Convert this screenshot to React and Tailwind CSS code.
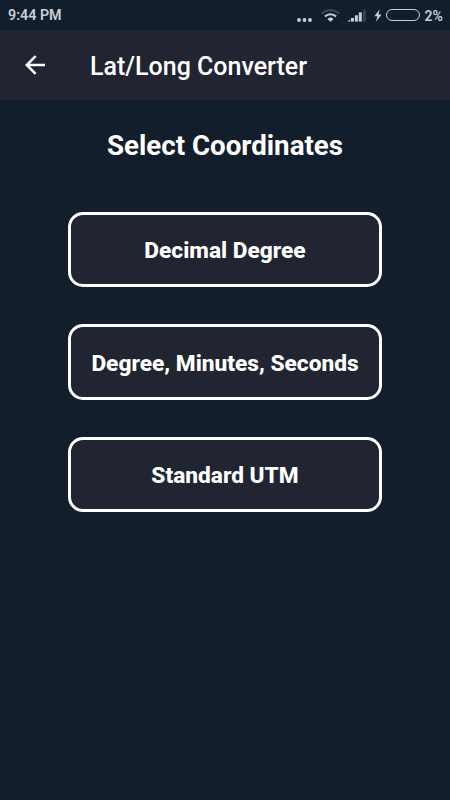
const formats = ['Decimal Degree', 'Degree, Minutes, Seconds', 'Standard UTM']

function WifiIcon() {
  return (
    <svg className="h-[13px] w-[19px]" viewBox="0 0 19 13" fill="none">
      <path d="M0.8 4.6a12.4 12.4 0 0 1 17.4 0" stroke="#3c4655" strokeWidth="2.2" />
      <path d="M3.9 7.6a8 8 0 0 1 11.2 0" stroke="#c9ced7" strokeWidth="2.1" />
      <path d="M9.5 12.8 6.5 9.9a4.4 4.4 0 0 1 6 0z" fill="#c9ced7" />
    </svg>
  )
}

function SignalIcon() {
  return (
    <svg className="h-[13px] w-[19px]" viewBox="0 0 19 13" fill="#c9ced7">
      <path d="M0.2 12.6 3.2 10.6v2z" />
      <rect x="4" y="9" width="3" height="3.6" />
      <rect x="7.9" y="6.3" width="3" height="6.3" />
      <rect x="11.8" y="3.3" width="3" height="9.3" />
      <rect x="15.8" y="0.3" width="3" height="12.3" fill="#384252" />
    </svg>
  )
}

function StatusBar() {
  return (
    <div className="flex h-[30px] items-center pr-2 pl-2 text-[#c9ced7]">
      <span className="mt-[2px] text-[14.3px] font-semibold">9:44 PM</span>
      <svg className="mt-[9px] mr-[9px] ml-auto h-[4px] w-[15px]" viewBox="0 0 15 4" fill="#c9ced7">
        <circle cx="2" cy="2" r="1.9" />
        <circle cx="7.5" cy="2" r="1.9" />
        <circle cx="13" cy="2" r="1.9" />
      </svg>
      <WifiIcon />
      <span className="mt-px ml-[7px]">
        <SignalIcon />
      </span>
      <svg className="mr-[4px] ml-[8px] h-[13px] w-[8px]" viewBox="0 0 8 13" fill="#c9ced7">
        <path d="M5.6 0.3 0.4 7.2h3L2 12.7 7.6 5.6H4.5z" />
      </svg>
      <span className="mr-[5px] h-[12px] w-[34px] rounded-full border-[1.5px] border-[#c9ced7]" />
      <span className="w-[17.5px] pt-[2px] text-[14px] font-semibold">2%</span>
    </div>
  )
}

export default function App() {
  return (
    <div className="flex h-[800px] w-[450px] flex-col overflow-hidden bg-[#131e2d] font-['Roboto',sans-serif] text-white">
      <StatusBar />
      <header className="flex h-[70px] items-center bg-[#202531] pl-[25px]">
        <button type="button" aria-label="Back">
          <svg className="h-[20px] w-[20px]" viewBox="0 0 20 20" fill="none" stroke="white" strokeWidth="2.5">
            <path d="M20 10H2.2M10.6 1.2 1.8 10l8.8 8.8" />
          </svg>
        </button>
        <h1 className="mt-[3px] ml-[45px] text-[25px] leading-8 font-medium">Lat/Long Converter</h1>
      </header>

      <main className="flex flex-col items-center">
        <h2 className="mt-[28px] text-[27.7px] leading-9 font-bold">Select Coordinates</h2>
        <div className="mt-[47.5px] flex flex-col gap-[37px]">
          {formats.map((format) => (
            <button
              key={format}
              type="button"
              className="flex h-[75.5px] w-[314px] items-center justify-center rounded-[15px] border-3 border-white bg-[#202531] pt-[4px] text-[22.7px] font-extrabold"
            >
              {format}
            </button>
          ))}
        </div>
      </main>
    </div>
  )
}
